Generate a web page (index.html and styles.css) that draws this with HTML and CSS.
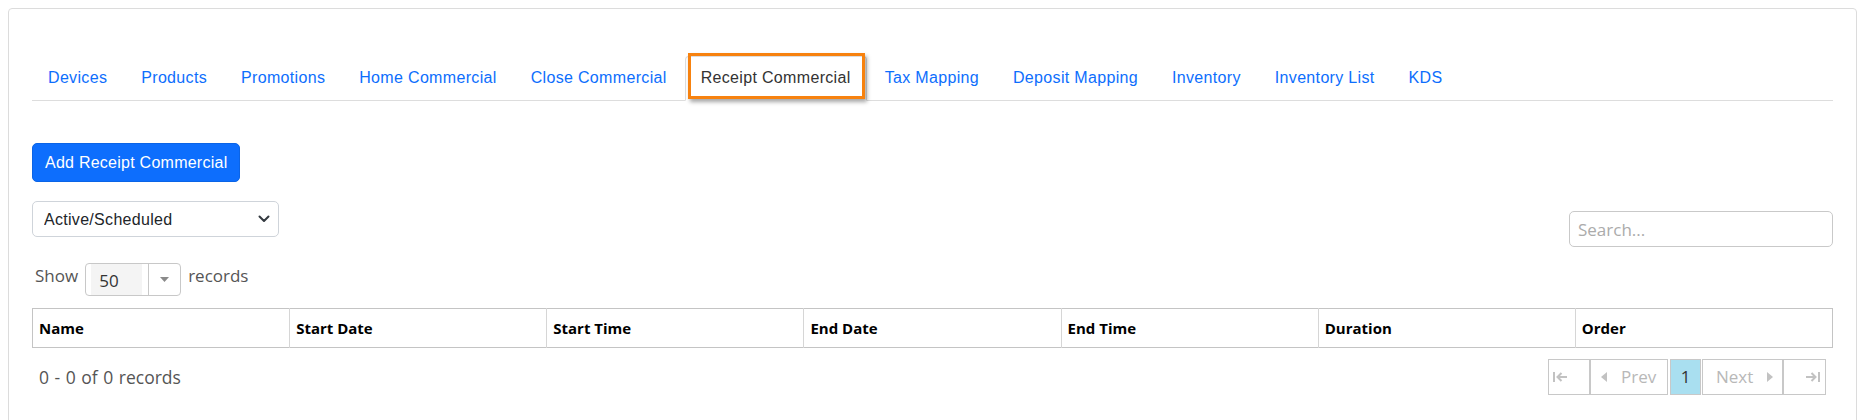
FILE: index.html
```html
<!DOCTYPE html>
<html lang="en">
<head>
<meta charset="utf-8">
<title>Receipt Commercial</title>
<link rel="stylesheet" href="styles.css">
</head>
<body>
<div class="card">
  <ul class="nav-tabs">
    <li><a href="#">Devices</a></li>
    <li><a href="#">Products</a></li>
    <li><a href="#">Promotions</a></li>
    <li><a href="#">Home Commercial</a></li>
    <li><a href="#">Close Commercial</a></li>
    <li class="active"><a href="#">Receipt Commercial<span class="highlight"></span></a></li>
    <li><a href="#">Tax Mapping</a></li>
    <li><a href="#">Deposit Mapping</a></li>
    <li><a href="#">Inventory</a></li>
    <li><a href="#">Inventory List</a></li>
    <li><a href="#">KDS</a></li>
  </ul>

  <div class="actions">
    <button class="btn-primary" type="button">Add Receipt Commercial</button>
  </div>

  <div class="filters">
    <select class="form-select">
      <option>Active/Scheduled</option>
      <option>Expired</option>
      <option>All</option>
    </select>
    <input class="search" type="text" placeholder="Search...">
  </div>

  <div class="page-size">
    <span class="ps-label">Show</span>
    <span class="ddl">
      <span class="ddl-value">50</span>
      <span class="ddl-arrow"><svg width="9" height="5" viewBox="0 0 9 5"><path d="M0 0h9L4.5 5z" fill="#8a8a8a"/></svg></span>
    </span>
    <span class="ps-label">records</span>
  </div>

  <table class="grid">
    <thead>
      <tr>
        <th>Name</th>
        <th>Start Date</th>
        <th>Start Time</th>
        <th>End Date</th>
        <th>End Time</th>
        <th>Duration</th>
        <th>Order</th>
      </tr>
    </thead>
  </table>

  <div class="grid-footer">
    <span class="info">0 - 0 of 0 records</span>
    <div class="pager">
      <span class="pg pg-first"><svg width="14" height="10" viewBox="0 0 14 10"><path d="M1 0v10" stroke="#c2c2c2" stroke-width="2"/><path d="M14 5H4.5M8.5 1L4.5 5l4 4" stroke="#c2c2c2" stroke-width="2" fill="none"/></svg></span>
      <span class="pg pg-prev"><svg width="6" height="10" viewBox="0 0 6 10"><path d="M6 0v10L0 5z" fill="#c2c2c2"/></svg><span class="pg-text">Prev</span></span>
      <span class="pg pg-num">1</span>
      <span class="pg pg-next"><span class="pg-text">Next</span><svg width="6" height="10" viewBox="0 0 6 10"><path d="M0 0v10l6-5z" fill="#c2c2c2"/></svg></span>
      <span class="pg pg-last"><svg width="14" height="10" viewBox="0 0 14 10"><path d="M13 0v10" stroke="#c2c2c2" stroke-width="2"/><path d="M0 5h9.5M5.5 1l4 4-4 4" stroke="#c2c2c2" stroke-width="2" fill="none"/></svg></span>
    </div>
  </div>
</div>
</body>
</html>
```

FILE: styles.css
```css
html, body {
  background: #ffffff;
}

body {
  margin: 8px;
  font-family: "Liberation Sans", Arial, sans-serif;
  font-size: 16px;
  color: #212529;
}

.card {
  border: 1px solid #dcdcdc;
  border-radius: 4px;
  padding: 47px 23px 80px 23px;
}

/* Tabs */
.nav-tabs {
  display: flex;
  list-style: none;
  margin: 0;
  padding: 0;
  border-bottom: 1px solid #dddddd;
}

.nav-tabs li {
  margin-bottom: -1px;
}

.nav-tabs a {
  position: relative;
  display: block;
  margin-right: 2px;
  padding: 9px 15px 11px;
  line-height: 23px;
  font-size: 16px;
  letter-spacing: 0.33px;
  color: #0d6efd;
  text-decoration: none;
  border: 1px solid transparent;
  border-radius: 4px 4px 0 0;
}

.nav-tabs li.active a {
  color: #333333;
  background: #ffffff;
  border-color: #dddddd #dddddd transparent;
}

.highlight {
  position: absolute;
  top: -4px;
  left: 2px;
  right: 1px;
  bottom: 1px;
  border: 3px solid #f7820f;
  box-shadow: 2px 3px 4px rgba(0, 0, 0, 0.35);
  pointer-events: none;
}

/* Add button */
.actions {
  display: flex;
  margin-top: 42px;
}

.btn-primary {
  font-family: "Liberation Sans", Arial, sans-serif;
  font-size: 16px;
  letter-spacing: 0.25px;
  line-height: 23px;
  padding: 7px 12px;
  color: #ffffff;
  background: #0d6efd;
  border: 1px solid #0b64e6;
  border-radius: 5px;
  cursor: pointer;
}

/* Filters */
.filters {
  display: flex;
  justify-content: space-between;
  align-items: flex-start;
  margin-top: 19px;
}

.form-select {
  -webkit-appearance: none;
  appearance: none;
  box-sizing: border-box;
  width: 247px;
  height: 36px;
  padding: 0 30px 0 11px;
  font-family: "Liberation Sans", Arial, sans-serif;
  font-size: 16px;
  letter-spacing: 0.3px;
  color: #212529;
  background-color: #ffffff;
  background-image: url("data:image/svg+xml,%3csvg xmlns='http://www.w3.org/2000/svg' viewBox='0 0 12 8'%3e%3cpath fill='none' stroke='%23343a40' stroke-linecap='round' stroke-linejoin='round' stroke-width='2' d='M1.5 1.5l4.5 4.5 4.5-4.5'/%3e%3c/svg%3e");
  background-repeat: no-repeat;
  background-position: right 8px center;
  background-size: 12px 8px;
  border: 1px solid #cfd4da;
  border-radius: 5px;
}

.search {
  box-sizing: border-box;
  width: 264px;
  height: 36px;
  margin-top: 10px;
  padding: 0 8px;
  font-family: "Open Sans", sans-serif;
  font-size: 17px;
  color: #333333;
  border: 1px solid #c9c9c9;
  border-radius: 5px;
  outline: none;
}

.search::placeholder {
  color: #ababab;
}

/* Page size */
.page-size {
  display: flex;
  align-items: flex-start;
  gap: 7px;
  margin-top: 16px;
  height: 33px;
  padding-left: 3px;
  font-family: "Open Sans", sans-serif;
  font-size: 17px;
  color: #555555;
}

.ps-label {
  line-height: 24px;
  margin-top: 1px;
}

.ddl {
  display: flex;
  box-sizing: border-box;
  width: 96px;
  height: 33px;
  border: 1px solid #c8c8c8;
  border-radius: 4px;
  overflow: hidden;
}

.ddl-value {
  box-sizing: border-box;
  width: 51px;
  margin-left: 5px;
  padding: 5px 0 0 8px;
  line-height: 24px;
  background: #f4f4f4;
  color: #333333;
}

.ddl-arrow {
  display: flex;
  align-items: center;
  justify-content: center;
  flex: 1;
  margin-left: 6px;
  border-left: 1px solid #c8c8c8;
}

/* Grid */
.grid {
  width: 100%;
  margin-top: 12px;
  border-collapse: collapse;
  table-layout: fixed;
  border: 1px solid #c4c4c4;
  font-family: "Open Sans", sans-serif;
}

.grid th {
  padding: 7px 6px;
  line-height: 24px;
  font-size: 15px;
  font-weight: 700;
  color: #000000;
  text-align: left;
  border-left: 1px solid #d6d6d6;
}

.grid th:first-child {
  border-left: 0;
}

.grid-footer {
  display: flex;
  justify-content: space-between;
  align-items: center;
  margin-top: 11px;
  font-family: "Open Sans", sans-serif;
  font-size: 17px;
}

.info {
  padding-left: 7px;
  line-height: 24px;
  font-size: 17.5px;
  word-spacing: 1px;
  color: #555555;
}

.pager {
  display: flex;
  padding-right: 7px;
}

.pg {
  box-sizing: border-box;
  display: flex;
  align-items: center;
  height: 36px;
  border: 1px solid #c8c8c8;
  color: #b8b8b8;
  line-height: 24px;
}

.pg-first {
  width: 42px;
  padding-left: 4px;
}

.pg-prev {
  width: 78px;
  padding-left: 10px;
}

.pg-prev .pg-text {
  margin-left: 14px;
}

.pg-num {
  width: 31px;
  margin-left: 2px;
  justify-content: center;
  background: #a9dff0;
  color: #333333;
}

.pg-next {
  width: 81px;
  margin-left: 1px;
  padding-left: 13px;
}

.pg-next .pg-text {
  margin-right: 14px;
}

.pg-last {
  width: 43px;
  justify-content: flex-end;
  padding-right: 5px;
}
```
